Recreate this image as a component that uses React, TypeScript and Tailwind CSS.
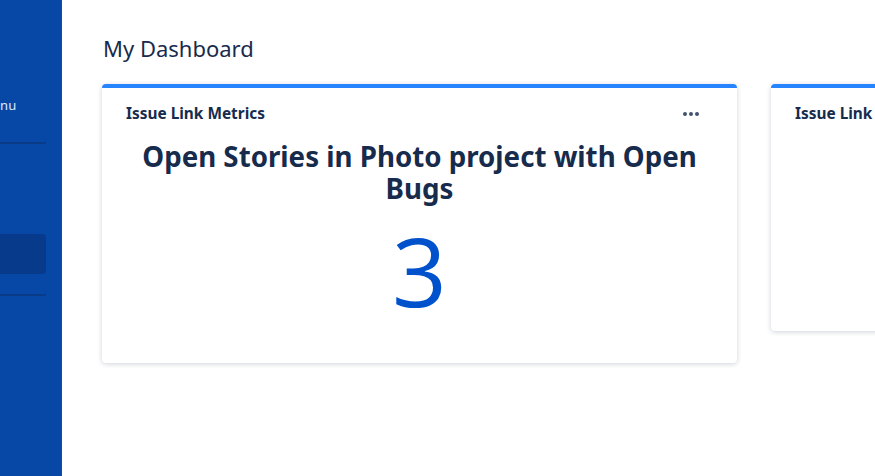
import React from 'react';

const font = { fontFamily: '"Noto Sans", "Open Sans", sans-serif' };

const Sidebar: React.FC = () => (
  <aside className="w-[62px] shrink-0 bg-[#0747A6] overflow-hidden border-r border-[#0b4fb3]">
    {/* the menu is mostly slid out of view; only its right edge shows */}
    <div className="w-[200px] -ml-[154px] pt-[95px]">
      <div className="pl-[135px] text-[13px] leading-[20px] text-[#DEEBFF]">Menu</div>
      <div className="mt-[27px] h-[2px] bg-[#0a3b86]" />
      <div className="mt-[90px] h-[40px] rounded bg-[#083a8c]" />
      <div className="mt-[20px] h-[2px] bg-[#0a3b86]" />
    </div>
  </aside>
);

const Card: React.FC<{ title: string; headline?: string; value?: string; height: string; showMenu?: boolean }> = ({
  title,
  headline,
  value,
  height,
  showMenu,
}) => (
  <div
    className={`w-[635px] shrink-0 ${height} bg-white rounded-[4px] border-t-4 border-[#2684FF] shadow-[0_1px_5px_rgba(9,30,66,0.2)] px-6 pt-[14px]`}
  >
    <div className="flex items-center justify-between">
      <span className="text-[15.4px] font-bold leading-[24px] text-[#172B4D] whitespace-nowrap">{title}</span>
      {showMenu && (
        <button className="mr-[10px] flex gap-[2px] items-center h-6 px-1">
          <span className="w-[4px] h-[4px] rounded-full bg-[#42526E]" />
          <span className="w-[4px] h-[4px] rounded-full bg-[#42526E]" />
          <span className="w-[4px] h-[4px] rounded-full bg-[#42526E]" />
        </button>
      )}
    </div>
    {headline && (
      <h2 className="mt-[14px] text-center text-[27.7px] font-bold leading-[32px] text-[#172B4D]">{headline}</h2>
    )}
    {value && (
      <div className="mt-[10px] text-center font-['Open_Sans',sans-serif] text-[96px] font-normal leading-[112px] text-[#0052CC]">
        {value}
      </div>
    )}
  </div>
);

export default function App() {
  return (
    <div className="flex w-[875px] h-[476px] overflow-hidden bg-white" style={font}>
      <Sidebar />
      <main className="flex-1 min-w-0 pl-10 pt-[33px]">
        <h1 className="pl-px text-[22px] leading-[30px] text-[#172B4D]">My Dashboard</h1>
        <div className="mt-[21px] flex gap-[34px] items-start">
          <Card
            title="Issue Link Metrics"
            headline="Open Stories in Photo project with Open Bugs"
            value="3"
            height="h-[279px]"
            showMenu
          />
          <Card title="Issue Link Metrics" height="h-[247px]" showMenu />
        </div>
      </main>
    </div>
  );
}
